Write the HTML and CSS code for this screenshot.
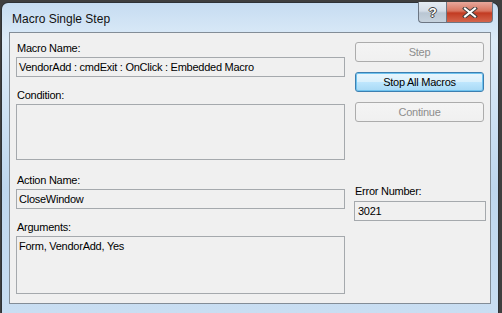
FILE: index.html
```html
<!DOCTYPE html>
<html lang="en">
<head>
    <meta charset="UTF-8">
    <title>Macro Single Step</title>
    <link rel="stylesheet" href="styles.css">
</head>
<body>

<div class="window">
    <div class="titlebar">
        <span class="title">Macro Single Step</span>
        <div class="caption-buttons">
            <div class="cap-btn help">?</div>
            <div class="cap-btn close">
                <svg width="16" height="11" viewBox="0 0 16 11">
                    <path d="M3 1.5 L13 9.5 M13 1.5 L3 9.5" stroke="#3d3d3d" stroke-width="4" stroke-linecap="square"/>
                    <path d="M3 1.5 L13 9.5 M13 1.5 L3 9.5" stroke="#fff" stroke-width="2" stroke-linecap="square"/>
                </svg>
            </div>
        </div>
    </div>

    <div class="client">
        <div class="left-col">
            <label class="label first">Macro Name:</label>
            <div class="field">VendorAdd : cmdExit : OnClick : Embedded Macro</div>

            <label class="label">Condition:</label>
            <div class="field box-condition"></div>

            <label class="label gap-action">Action Name:</label>
            <div class="field">CloseWindow</div>

            <label class="label">Arguments:</label>
            <div class="field box-args">Form, VendorAdd, Yes</div>
        </div>

        <div class="right-col">
            <button class="btn" disabled>Step</button>
            <button class="btn default">Stop All Macros</button>
            <button class="btn" disabled>Continue</button>

            <label class="label error-label">Error Number:</label>
            <div class="field">3021</div>
        </div>
    </div>
</div>

</body>
</html>
```

FILE: styles.css
```css
body {
    margin: 0;
    background: #3f3f3f;
    font-family: "Liberation Sans", Arial, sans-serif;
    font-size: 11px;
    letter-spacing: -0.25px;
    color: #000;
}
.window {
    margin: 2px 0 0 1px;
    width: 498px;
    height: 311px;
    box-sizing: border-box;
    border: 1px solid #2e3236;
    border-bottom: none;
    border-radius: 7px 7px 0 0;
    background: linear-gradient(to bottom, #c6dcf1 0%, #dcebf8 12%, #bfd7ee 60%, #c9def2 100%);
    padding: 0 7px;
}
.titlebar {
    height: 29px;
    display: flex;
    justify-content: space-between;
    align-items: flex-start;
}
.title {
    font-size: 12px;
    letter-spacing: 0;
    color: #111;
    margin: 9px 0 0 3px;
}
.caption-buttons {
    display: flex;
    margin-right: -2px;
    margin-top: -1px;
}
.cap-btn {
    height: 20px;
    border: 1px solid #6c7683;
    border-top: none;
    display: flex;
    align-items: center;
    justify-content: center;
}
.help {
    width: 27px;
    border-radius: 0 0 0 4px;
    border-right: none;
    background: linear-gradient(to bottom, #e4ebf2 0%, #d4dde7 45%, #b9c6d3 55%, #c7d3de 100%);
    color: #fff;
    font-weight: bold;
    font-size: 13px;
    text-shadow: 0 0 1px #333, 1px 0 0 #444, -1px 0 0 #444, 0 1px 0 #444, 0 -1px 0 #444;
}
.close {
    width: 45px;
    border-radius: 0 0 4px 0;
    background: linear-gradient(to bottom, #e7a89c 0%, #d8755f 45%, #c23b22 55%, #d4654c 100%);
}
.client {
    background: #f0f0f0;
    border: 1px solid #838d97;
    height: 272px;
    box-sizing: border-box;
    padding: 9px 0 0 6px;
    display: flex;
}
.left-col {
    width: 329px;
    display: flex;
    flex-direction: column;
}
.right-col {
    width: 131px;
    margin-left: 9px;
    display: flex;
    flex-direction: column;
}
.label {
    display: block;
    height: 13px;
    line-height: 13px;
    margin: 12px 0 2px 1px;
}
.label.first {
    margin-top: 0;
}
.label.gap-action {
    margin-top: 14px;
}
.field {
    height: 20px;
    box-sizing: border-box;
    border: 1px solid #a5a9ad;
    background: #f0f0f0;
    padding: 3px 0 0 2px;
    line-height: 13px;
    white-space: nowrap;
}
.box-condition {
    height: 56px;
}
.box-args {
    height: 58px;
}
.btn {
    width: 129px;
    height: 20px;
    margin: 0 0 10px 1px;
    padding: 0;
    font-family: inherit;
    font-size: 11px;
    letter-spacing: -0.25px;
    border: 1px solid #acacac;
    border-radius: 3px;
    background: linear-gradient(to bottom, #f4f4f4, #f0f0f0);
    color: #8d8d8d;
}
.btn.default {
    color: #000;
    border-color: #3c7fb1;
    background: linear-gradient(to bottom, #eaf6fd 0%, #d9f0fc 50%, #bee6fd 51%, #a7d9f5 100%);
    box-shadow: inset 0 0 0 1px #6fc3ef;
}
.error-label {
    margin-top: 53px;
    margin-bottom: 3px;
}
.right-col .field {
    width: 132px;
    height: 20px;
    padding-left: 3px;
}
```
